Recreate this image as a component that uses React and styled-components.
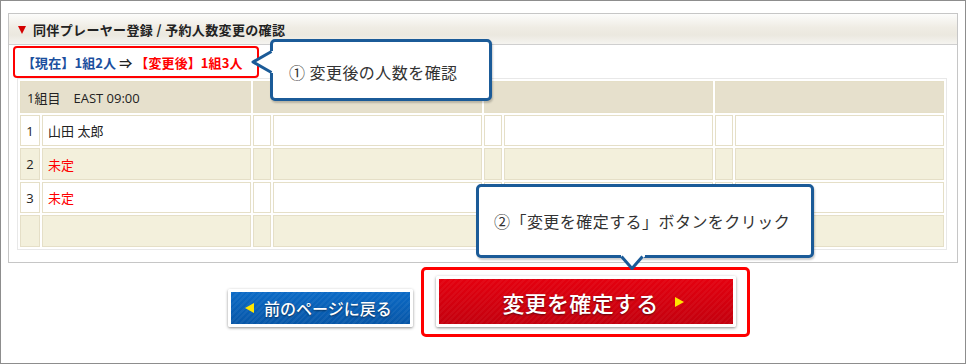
import styled, { createGlobalStyle } from "styled-components";

const GlobalStyle = createGlobalStyle`
  body {
    margin: 0;
    background: #fff;
    font-family: "Noto Sans CJK JP", "Noto Sans", sans-serif;
    color: #222;
  }
`;

const Frame = styled.div`
  position: relative;
  width: 966px;
  height: 364px;
  box-sizing: border-box;
  border: 1px solid #8d8d8d;
  background: #fff;
  overflow: hidden;
`;

const Panel = styled.section`
  width: 950px;
  height: 250px;
  box-sizing: border-box;
  margin: 12px 0 0 7px;
  border: 1px solid #c6c6c6;
  background: #fff;
`;

const PanelHeader = styled.h2`
  margin: 0;
  height: 31px;
  box-sizing: border-box;
  border-bottom: 1px solid #cfcfcf;
  background: linear-gradient(#fcfcfb 0%, #efece4 45%, #ebe8df 70%, #f5f4f0 100%);
  display: flex;
  align-items: center;
  gap: 7px;
  padding-left: 9px;
  font-size: 13px;
  font-weight: 700;
  letter-spacing: 0.35px;
  color: #222;
`;

const Caret = styled.span`
  width: 0;
  height: 0;
  border-left: 4px solid transparent;
  border-right: 4px solid transparent;
  border-top: 8px solid #d40000;
  margin-top: 1px;
`;

const SummaryBox = styled.div`
  width: 246px;
  height: 32px;
  box-sizing: border-box;
  margin: 1px 0 0 4px;
  border: 2px solid #f00;
  border-radius: 4px;
  display: flex;
  align-items: center;
  padding-left: 7px;
  font-size: 13px;
  font-weight: 700;
  letter-spacing: 0.1px;
  white-space: pre;
`;

const Tone = styled.span`
  color: ${(p) => p.$color};
`;

const Grid = styled.div`
  width: 930px;
  box-sizing: border-box;
  margin-left: 8px;
  border: 1px solid #e8e8e8;
  padding: 2px;
  display: grid;
  grid-template-columns: 20px 209px 18px 209px 18px 209px 18px 209px;
  grid-template-rows: 32px 31px 32px 31px 32px;
  gap: 2px;
`;

const Cell = styled.div`
  box-sizing: border-box;
  grid-column: span ${(p) => p.$span || 1};
  border: 1px solid #e5dfc7;
  background: ${(p) => (p.$head ? "#e6e0cc" : p.$alt ? "#f3f0dc" : "#fff")};
  display: flex;
  align-items: center;
  justify-content: ${(p) => (p.$center ? "center" : "flex-start")};
  padding: ${(p) => (p.$center ? "0" : p.$head ? "0 0 0 6px" : "0 0 0 5px")};
  font-family: "Open Sans", "Noto Sans CJK JP", sans-serif;
  font-size: 13px;
  color: ${(p) => (p.$red ? "#f00" : "#222")};
  white-space: pre;
`;

const ButtonRow = styled.div`
  display: flex;
  align-items: flex-start;
  gap: 8px;
  margin: 4px 0 0 227px;
`;

const ButtonBase = styled.button`
  box-sizing: border-box;
  border: 3px solid #fff;
  border-radius: 2px;
  box-shadow: 0 1px 3px rgba(0, 0, 0, 0.45);
  display: flex;
  align-items: center;
  justify-content: center;
  color: #fff;
  font-family: "Noto Sans CJK JP", "Noto Sans", sans-serif;
  font-weight: 500;
  text-shadow: 0 1px 2px rgba(0, 0, 0, 0.5);
  cursor: pointer;
`;

const BackButton = styled(ButtonBase)`
  width: 185px;
  height: 38px;
  margin-top: 22px;
  justify-content: flex-start;
  padding: 0 0 0 14px;
  gap: 10px;
  font-size: 16px;
  background: repeating-linear-gradient(135deg, rgba(255, 255, 255, 0.05) 0 2px, transparent 2px 4px),
    linear-gradient(#0b6ac6, #0756a7);
`;

const ConfirmFrame = styled.div`
  width: 329px;
  height: 70px;
  box-sizing: border-box;
  border: 3px solid #f00;
  border-radius: 5px;
  padding: 6px 0 0 12px;
`;

const ConfirmButton = styled(ButtonBase)`
  width: 300px;
  height: 51px;
  gap: 16px;
  padding: 0 0 0 14px;
  font-size: 22px;
  letter-spacing: 0.3px;
  background: repeating-linear-gradient(135deg, rgba(255, 255, 255, 0.04) 0 2px, transparent 2px 4px),
    linear-gradient(#e4000f, #c3000e);
`;

const Tri = styled.span`
  width: 0;
  height: 0;
  border-top: 5px solid transparent;
  border-bottom: 5px solid transparent;
  ${(p) => (p.$dir === "left" ? "border-right: 9px solid #ffe500;" : "border-left: 9px solid #ffe500;")}
`;

const Callout = styled.div`
  position: absolute;
  left: ${(p) => p.$x}px;
  top: ${(p) => p.$y}px;
  width: ${(p) => p.$w}px;
  height: ${(p) => p.$h}px;
  box-sizing: border-box;
  border: 3px solid #1b5b98;
  border-radius: 5px;
  background: #fff;
  box-shadow: 1px 2px 2px rgba(0, 0, 0, 0.2);
  display: flex;
  align-items: center;
  padding: ${(p) => p.$pad};
  font-size: 16px;
  letter-spacing: 0.45px;
  color: #333;
  white-space: pre;
`;

const Pointer = styled.svg`
  position: absolute;
  left: ${(p) => p.$x}px;
  top: ${(p) => p.$y}px;
  overflow: visible;
`;

const rows = [
  { no: "1", name: "山田 太郎" },
  { no: "2", name: "未定", tbd: true },
  { no: "3", name: "未定", tbd: true },
  { no: "", name: "" },
];

function App() {
  return (
    <>
      <GlobalStyle />
      <Frame>
        <Panel>
          <PanelHeader>
            <Caret />
            同伴プレーヤー登録 / 予約人数変更の確認
          </PanelHeader>
          <SummaryBox>
            <Tone $color="#1b4f9e">【現在】1組2人</Tone>
            <Tone $color="#222"> ⇒ </Tone>
            <Tone $color="#f00">【変更後】1組3人</Tone>
          </SummaryBox>
          <Grid>
            <Cell $head $span={2}>1組目　EAST 09:00</Cell>
            <Cell $head $span={2} />
            <Cell $head $span={2} />
            <Cell $head $span={2} />
            {rows.map((r, i) => [
              <Cell key={`n${i}`} $alt={i % 2 === 1} $center>{r.no}</Cell>,
              <Cell key={`m${i}`} $alt={i % 2 === 1} $red={r.tbd}>{r.name}</Cell>,
              ...[0, 1, 2, 3, 4, 5].map((c) => <Cell key={`e${i}-${c}`} $alt={i % 2 === 1} />),
            ])}
          </Grid>
        </Panel>
        <ButtonRow>
          <BackButton>
            <Tri $dir="left" />
            前のページに戻る
          </BackButton>
          <ConfirmFrame>
            <ConfirmButton>
              変更を確定する
              <Tri $dir="right" />
            </ConfirmButton>
          </ConfirmFrame>
        </ButtonRow>

        <Callout $x={269} $y={38} $w={222} $h={62} $pad="3px 0 0 16px">
          ① 変更後の人数を確認
          <Pointer $x={-23} $y={6} width="26" height="28" viewBox="0 0 26 28">
            <path d="M21.5 3 L3 14 L21.5 25 L25 25 L25 3 Z" fill="#fff" />
            <path d="M21.5 3.5 L3 14 L21.5 24.5" fill="none" stroke="#1b5b98" strokeWidth="3" strokeLinejoin="round" />
          </Pointer>
        </Callout>

        <Callout $x={475} $y={183} $w={338} $h={74} $pad="0 0 0 15px">
          ②「変更を確定する」ボタンをクリック
          <Pointer $x={137} $y={65} width="34" height="22" viewBox="0 0 34 22">
            <path d="M5 1 L29 1 L29 4.5 L16 17 L5 4.5 Z" fill="#fff" />
            <path d="M5.5 4.5 L16 16.5 L26.5 4.5" fill="none" stroke="#1b5b98" strokeWidth="3" strokeLinejoin="round" />
          </Pointer>
        </Callout>
      </Frame>
    </>
  );
}

export default App;
